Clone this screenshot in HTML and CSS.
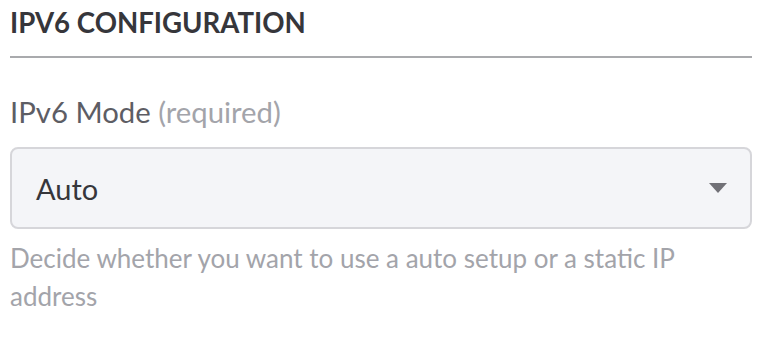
FILE: index.html
```html
<!DOCTYPE html>
<html lang="en">
<head>
<meta charset="utf-8">
<title>IPv6 Configuration</title>
<link rel="stylesheet" href="styles.css">
</head>
<body>
<section class="panel">
  <h2 class="panel-title">IPV6 CONFIGURATION</h2>
  <div class="field">
    <label class="field-label" for="ipv6-mode">IPv6 Mode <span class="field-req">(required)</span></label>
    <div class="select">
      <span class="select-value" id="ipv6-mode">Auto</span>
      <svg class="select-arrow" width="18" height="10" viewBox="0 0 18 10" aria-hidden="true"><path d="M0 0H18L9 10Z" fill="#717177"/></svg>
    </div>
    <p class="field-help">Decide whether you want to use a auto setup or a static IP address</p>
  </div>
</section>
</body>
</html>
```
FILE: styles.css
```css
html, body {
  margin: 0;
  padding: 0;
  background: #ffffff;
}
body {
  font-family: Lato, "Open Sans", sans-serif;
}
.panel {
  padding: 0 14px 0 10px;
}
.panel-title {
  margin: 0;
  padding: 5px 0 15px;
  font-size: 27.6px;
  line-height: 36px;
  font-weight: 700;
  color: #36363b;
  border-bottom: 2px solid #a9aaad;
}
.field {
  display: flex;
  flex-direction: column;
}
.field-label {
  margin-top: 36px;
  font-size: 29.3px;
  line-height: 36px;
  color: #5d5d64;
}
.field-req {
  color: #a3a4aa;
}
.select {
  margin-top: 17px;
  height: 78px;
  border: 2px solid #d6d6da;
  border-radius: 8px;
  background: #f4f5f8;
  display: flex;
  align-items: center;
  justify-content: space-between;
  padding: 0 23px 0 24px;
}
.select-value {
  font-size: 29px;
  color: #36363b;
}
.select-arrow {
  display: block;
}
.field-help {
  margin: 10px 0 0;
  font-size: 26px;
  line-height: 38px;
  color: #a3a4aa;
}
```
